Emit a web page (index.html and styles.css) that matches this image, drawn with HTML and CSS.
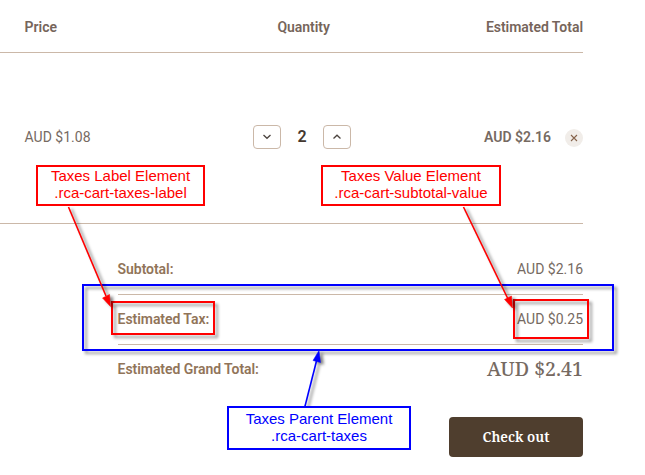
FILE: index.html
```html
<!DOCTYPE html>
<html lang="en">
<head>
<meta charset="utf-8">
<title>Cart</title>
<link rel="stylesheet" href="styles.css">
</head>
<body>
<main class="cart">
  <header class="cart-head">
    <span class="head-price">Price</span>
    <span class="head-quantity">Quantity</span>
    <span class="head-total">Estimated Total</span>
  </header>
  <section class="cart-item">
    <span class="item-price">AUD $1.08</span>
    <div class="stepper">
      <button class="step" aria-label="Decrease"><svg width="10" height="8" viewBox="0 0 10 8"><path d="M1.5 2 5 5.3 8.5 2"/></svg></button>
      <span class="count">2</span>
      <button class="step" aria-label="Increase"><svg width="10" height="8" viewBox="0 0 10 8"><path d="M1.5 5.5 5 2.2 8.5 5.5"/></svg></button>
    </div>
    <div class="item-end">
      <span class="item-total">AUD $2.16</span>
      <button class="remove" aria-label="Remove"><svg width="8" height="8" viewBox="0 0 8 8"><path d="M1 1 7 7M7 1 1 7"/></svg></button>
    </div>
  </section>
  <section class="summary">
    <div class="line"><span class="label">Subtotal:</span><span class="value">AUD $2.16</span></div>
    <div class="line"><span class="label">Estimated Tax:</span><span class="value">AUD $0.25</span></div>
    <div class="line"><span class="label">Estimated Grand Total:</span><span class="grand">AUD $2.41</span></div>
    <button class="checkout">Check out</button>
  </section>
</main>
<div class="frame frame-parent"></div>
<div class="frame frame-label"></div>
<div class="frame frame-value"></div>
<svg class="arrows" width="645" height="475" viewBox="0 0 645 475">
  <g class="arrow-red">
    <path class="shaft" d="M68.5 207 106 296"/><path class="tip" d="M110.500 306.500 102.500 298 109.500 294.500Z"/>
    <path class="shaft" d="M463.500 207 508 299"/><path class="tip" d="M512.500 308 504.500 299.500 511.500 296Z"/>
  </g>
  <g class="arrow-blue">
    <path class="shaft" d="M304.800 407 317 359"/><path class="tip" d="M319 350.500 320.500 362.500 313 360.500Z"/>
  </g>
</svg>
<div class="note note-label"><span>Taxes Label Element</span><span>.rca-cart-taxes-label</span></div>
<div class="note note-value"><span>Taxes Value Element</span><span>.rca-cart-subtotal-value</span></div>
<div class="note note-parent"><span>Taxes Parent Element</span><span>.rca-cart-taxes</span></div>
</body>
</html>
```
FILE: styles.css
```css
* { box-sizing: border-box; }
body {
  position: relative;
  width: 645px;
  height: 475px;
  margin: 0;
  overflow: hidden;
  background: #fff;
  color: #766a62;
  font: 14px/20px Roboto, sans-serif;
}
button { padding: 0; font: inherit; }
.cart { width: 583px; }
.cart-head, .cart-item {
  display: grid;
  grid-template-columns: 228.400px 100px 1fr;
  align-items: center;
  padding-left: 24.600px;
  border-bottom: 1px solid #cbb8a8;
}
.cart-head {
  height: 53px;
  padding-top: 2px;
  color: #76655b;
  font-weight: 600;
  letter-spacing: -.04px;
}
.head-quantity { padding-left: 24.400px; }
.head-total { text-align: right; }
.cart-item { height: 171px; padding-bottom: 2px; }
.stepper { display: flex; align-items: center; justify-content: space-between; width: 98px; }
.step {
  display: flex;
  align-items: center;
  justify-content: center;
  width: 28px;
  height: 24px;
  border: 1px solid #cbb8a8;
  border-radius: 4px;
  background: #fff;
}
.step svg, .remove svg { fill: none; stroke: #4d4540; stroke-width: 1.3; }
.count { color: #44382f; font-size: 16px; font-weight: 600; }
.item-end { display: flex; align-items: center; justify-content: flex-end; gap: 14px; }
.item-total { font-weight: 600; }
.remove {
  display: flex;
  align-items: center;
  justify-content: center;
  width: 18px;
  height: 18px;
  margin-top: 2px;
  border: 0;
  border-radius: 50%;
  background: #f1ede9;
}
.remove svg { stroke: #86634b; stroke-width: 1.1; }
.summary {
  display: flex;
  flex-direction: column;
  margin-left: 117.600px;
  padding-top: 21px;
}
.line {
  display: flex;
  align-items: center;
  justify-content: space-between;
  height: 50px;
  padding-bottom: 2px;
  border-bottom: 1px solid #cbb8a8;
}
.line:nth-child(3) { border-color: transparent; }
.label { color: #917459; font-weight: 600; letter-spacing: -.06px; }
.grand { font: 500 19.500px/24px "Noto Serif", "Liberation Serif", serif; }
.checkout {
  align-self: flex-end;
  width: 134px;
  height: 40px;
  margin-top: 22px;
  border: 0;
  border-radius: 4px;
  background: #4f3e2e;
  color: #fff;
  font: 600 13.700px/20px "Noto Serif", "Liberation Serif", serif;
}
.frame { position: absolute; border: 2px solid #f00; filter: drop-shadow(3px 3px 1.5px rgba(0, 0, 0, .4)); }
.frame-parent { left: 82px; top: 284px; width: 532px; height: 67px; border-color: #00f; }
.frame-label { left: 111px; top: 301px; width: 104px; height: 34px; }
.frame-value { left: 513px; top: 299px; width: 76px; height: 40px; }
.arrows { position: absolute; left: 0; top: 0; filter: drop-shadow(3px 2px 1.5px rgba(0, 0, 0, .5)); }
.shaft { stroke-width: 1.6; fill: none; }
.arrow-red { stroke: #f00; fill: #f00; }
.arrow-blue { stroke: #00f; fill: #00f; }
.tip { stroke-width: .5; }
.note {
  position: absolute;
  display: flex;
  flex-direction: column;
  align-items: center;
  justify-content: center;
  padding-bottom: 3px;
  border: 2px solid #f00;
  background: #fff;
  color: #f00;
  font: 15px/17px "Liberation Sans", Arial, sans-serif;
  white-space: nowrap;
}
.note-label { left: 36px; top: 165px; width: 169px; height: 41px; }
.note-value { left: 321px; top: 165px; width: 180px; height: 41px; }
.note-parent { left: 227px; top: 406px; width: 184px; height: 44px; padding-bottom: 2px; border-color: #00f; color: #00f; }
```
